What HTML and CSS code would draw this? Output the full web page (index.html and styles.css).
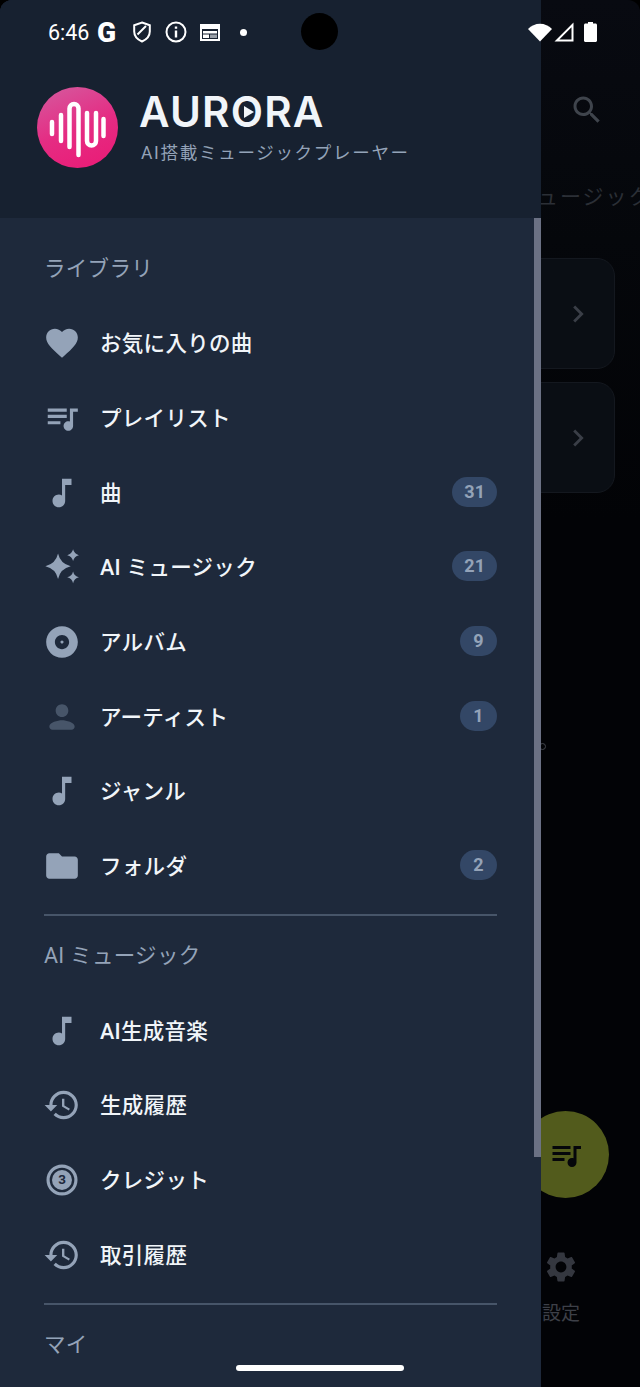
FILE: index.html
```html
<!DOCTYPE html>
<html lang="ja">
<head>
<meta charset="utf-8">
<title>Aurora</title>
<link rel="stylesheet" href="styles.css">
</head>
<body>
<div class="screen">
  <main class="app">
    <div class="app-top">
      <svg class="search" viewBox="0 0 24 24"><path d="M15.5 14h-.79l-.28-.27C15.41 12.59 16 11.11 16 9.5 16 5.91 13.09 3 9.5 3S3 5.91 3 9.5 5.91 16 9.5 16c1.61 0 3.09-.59 4.23-1.57l.27.28v.79l5 4.99L20.49 19l-4.99-5zm-6 0C7.01 14 5 11.99 5 9.5S7.01 5 9.5 5 14 7.01 14 9.5 11.99 14 9.5 14z"/></svg>
    </div>
    <p class="app-sub">ミュージック</p>
    <div class="cards">
      <div class="card"><svg class="chev" viewBox="0 0 24 24"><path d="M10 6L8.59 7.41 13.17 12l-4.58 4.59L10 18l6-6z"/></svg></div>
      <div class="card"><svg class="chev" viewBox="0 0 24 24"><path d="M10 6L8.59 7.41 13.17 12l-4.58 4.59L10 18l6-6z"/></svg></div>
    </div>
    <i class="ring"></i>
    <nav class="bottom-nav">
      <div class="nav-item">
        <svg class="gear" viewBox="0 0 24 24"><path d="M19.14 12.94c.04-.3.06-.61.06-.94 0-.32-.02-.64-.07-.94l2.03-1.58c.18-.14.23-.41.12-.61l-1.92-3.32c-.12-.22-.37-.29-.59-.22l-2.39.96c-.5-.38-1.03-.7-1.62-.94l-.36-2.54c-.04-.24-.24-.41-.48-.41h-3.84c-.24 0-.43.17-.47.41l-.36 2.54c-.59.24-1.13.57-1.62.94l-2.39-.96c-.22-.08-.47 0-.59.22L2.74 8.87c-.12.21-.08.47.12.61l2.03 1.58c-.05.3-.09.63-.09.94s.02.64.07.94l-2.03 1.58c-.18.14-.23.41-.12.61l1.92 3.32c.12.22.37.29.59.22l2.39-.96c.5.38 1.03.7 1.62.94l.36 2.54c.05.24.24.41.48.41h3.84c.24 0 .44-.17.47-.41l.36-2.54c.59-.24 1.13-.56 1.62-.94l2.39.96c.22.08.47 0 .59-.22l1.92-3.32c.12-.22.07-.47-.12-.61l-2.01-1.58zM12 15.6c-1.98 0-3.6-1.62-3.6-3.6s1.62-3.6 3.6-3.6 3.6 1.62 3.6 3.6-1.62 3.6-3.6 3.6z"/></svg>
        <span class="nav-label">設定</span>
      </div>
    </nav>
  </main>

  <div class="fab">
    <svg viewBox="0 0 24 24"><path d="M15 6H3v2h12V6zm0 4H3v2h12v-2zM3 16h8v-2H3v2zM17 6v8.18c-.31-.11-.65-.18-1-.18-1.66 0-3 1.34-3 3s1.34 3 3 3 3-1.34 3-3V8h3V6h-5z"/></svg>
  </div>

  <aside class="drawer">
    <header class="drawer-head">
      <svg class="logo" viewBox="0 0 81 81">
        <defs>
          <linearGradient id="lg" x1="0.2" y1="0" x2="0.6" y2="1">
            <stop offset="0" stop-color="#d6569c"/>
            <stop offset="0.55" stop-color="#e52c83"/>
            <stop offset="1" stop-color="#e91e78"/>
          </linearGradient>
        </defs>
        <circle cx="40.5" cy="40.5" r="40.5" fill="url(#lg)"/>
        <path class="logo-wave" d="M15 35v12M24 28v26M32.5 60V21.500a4.500 4.500 0 0 1 9 0V68M50 26v28a4.500 4.500 0 0 0 9 0V26M66.500 32v17"/>
      </svg>
      <div class="brand">
        <div class="wordmark">AUR<span class="wm-o">O<svg class="wm-play" viewBox="0 0 12 14"><path d="M1 1l10 6-10 6z"/></svg></span>RA</div>
        <div class="tagline">AI搭載ミュージックプレーヤー</div>
      </div>
    </header>

    <div class="drawer-body">
      <h2 class="section-label section-first">ライブラリ</h2>
      <ul class="menu">
        <li class="row"><svg class="ico" viewBox="0 0 24 24"><path d="M12 21.350l-1.450-1.320C5.400 15.360 2 12.280 2 8.500 2 5.420 4.420 3 7.500 3c1.740 0 3.410.81 4.500 2.090C13.090 3.810 14.760 3 16.500 3 19.580 3 22 5.420 22 8.500c0 3.780-3.400 6.860-8.550 11.540L12 21.350z"/></svg><span class="row-text">お気に入りの曲</span></li>
        <li class="row"><svg class="ico" viewBox="0 0 24 24"><path d="M15 6H3v2h12V6zm0 4H3v2h12v-2zM3 16h8v-2H3v2zM17 6v8.180c-.31-.11-.65-.18-1-.18-1.660 0-3 1.340-3 3s1.340 3 3 3 3-1.340 3-3V8h3V6h-5z"/></svg><span class="row-text">プレイリスト</span></li>
        <li class="row"><svg class="ico" viewBox="0 0 24 24"><path d="M12 3v10.550c-.59-.34-1.270-.55-2-.55-2.210 0-4 1.790-4 4s1.790 4 4 4 4-1.790 4-4V7h4V3h-6z"/></svg><span class="row-text">曲</span><span class="badge">31</span></li>
        <li class="row"><svg class="ico" viewBox="0 0 24 24"><path d="M9.500 3.500Q11 10 17.500 11.500 11 13 9.500 19.500 8 13 1.500 11.500 8 10 9.500 3.500zM19 .8Q19.700 3.800 22.700 4.500 19.700 5.200 19 8.200 18.300 5.200 15.300 4.500 18.300 3.800 19 .8zM19 14.800Q19.700 17.800 22.700 18.500 19.700 19.200 19 22.200 18.300 19.200 15.300 18.500 18.300 17.800 19 14.800z"/></svg><span class="row-text">AI ミュージック</span><span class="badge">21</span></li>
        <li class="row"><svg class="ico" viewBox="0 0 24 24"><path d="M12 2C6.480 2 2 6.480 2 12s4.480 10 10 10 10-4.480 10-10S17.520 2 12 2zm0 14.500c-2.490 0-4.500-2.010-4.500-4.500S9.510 7.500 12 7.500s4.500 2.010 4.500 4.500-2.010 4.500-4.500 4.500zm0-5.500c-.55 0-1 .45-1 1s.45 1 1 1 1-.45 1-1-.45-1-1-1z"/></svg><span class="row-text">アルバム</span><span class="badge">9</span></li>
        <li class="row"><svg class="ico ico-dim" viewBox="0 0 24 24"><path d="M12 12c2.210 0 4-1.790 4-4s-1.790-4-4-4-4 1.790-4 4 1.790 4 4 4zm0 2c-2.670 0-8 1.340-8 4c0 1.200.8 2 2 2h12c1.200 0 2-.8 2-2 0-2.660-5.330-4-8-4z"/></svg><span class="row-text">アーティスト</span><span class="badge">1</span></li>
        <li class="row"><svg class="ico" viewBox="0 0 24 24"><path d="M12 3v10.550c-.59-.34-1.270-.55-2-.55-2.210 0-4 1.790-4 4s1.790 4 4 4 4-1.790 4-4V7h4V3h-6z"/></svg><span class="row-text">ジャンル</span></li>
        <li class="row"><svg class="ico" viewBox="0 0 24 24"><path d="M10 4H4c-1.100 0-1.990.9-1.990 2L2 18c0 1.100.9 2 2 2h16c1.100 0 2-.9 2-2V8c0-1.100-.9-2-2-2h-8l-2-2z"/></svg><span class="row-text">フォルダ</span><span class="badge">2</span></li>
      </ul>
      <hr class="rule">
      <h2 class="section-label">AI ミュージック</h2>
      <ul class="menu">
        <li class="row"><svg class="ico" viewBox="0 0 24 24"><path d="M12 3v10.550c-.59-.34-1.270-.55-2-.55-2.210 0-4 1.790-4 4s1.790 4 4 4 4-1.790 4-4V7h4V3h-6z"/></svg><span class="row-text">AI生成音楽</span></li>
        <li class="row"><svg class="ico" viewBox="0 0 24 24"><path d="M13 3c-4.970 0-9 4.030-9 9H1l3.890 3.890.07.14L9 12H6c0-3.870 3.130-7 7-7s7 3.130 7 7-3.130 7-7 7c-1.930 0-3.680-.79-4.940-2.060l-1.420 1.420C8.270 19.990 10.510 21 13 21c4.970 0 9-4.030 9-9s-4.030-9-9-9zm-1 5v5l4.280 2.540.72-1.210-3.500-2.080V8H12z"/></svg><span class="row-text">生成履歴</span></li>
        <li class="row"><svg class="ico" viewBox="0 0 24 24"><circle class="cr-ring" cx="12" cy="12" r="8.800"/><circle class="cr-fill" cx="12" cy="12" r="6.300"/><text class="cr-num" x="12" y="14.300">3</text></svg><span class="row-text">クレジット</span></li>
        <li class="row"><svg class="ico" viewBox="0 0 24 24"><path d="M13 3c-4.970 0-9 4.030-9 9H1l3.890 3.890.07.14L9 12H6c0-3.870 3.130-7 7-7s7 3.130 7 7-3.130 7-7 7c-1.930 0-3.680-.79-4.940-2.060l-1.420 1.420C8.270 19.990 10.510 21 13 21c4.970 0 9-4.030 9-9s-4.030-9-9-9zm-1 5v5l4.280 2.540.72-1.210-3.500-2.080V8H12z"/></svg><span class="row-text">取引履歴</span></li>
      </ul>
      <hr class="rule">
      <h2 class="section-label">マイ</h2>
      <i class="scrollbar"></i>
    </div>
  </aside>

  <div class="statusbar">
    <span class="clock">6:46</span>
    <span class="g-mark">G</span>
    <svg class="st-shield" viewBox="0 0 20 22"><path class="st-line" d="M10 1.500l7.800 2.800v6.200c0 4.600-3.200 8-7.800 10-4.600-2-7.800-5.400-7.800-10V4.300z"/><path class="st-line" d="M5.500 13.500L14 5"/></svg>
    <svg class="st-info" viewBox="0 0 22 22"><circle class="st-line" cx="11" cy="11" r="9.500"/><path class="st-fill" d="M9.800 9.500h2.400v7H9.800zM9.800 5.500h2.400v2.300H9.800z"/></svg>
    <svg class="st-cal" viewBox="0 0 22 19"><path class="st-fill" d="M1 1h20v17H1zM3 6v10h16V6z"/><path class="st-fill" d="M4 8h14v2.500H4zM4 11.500h6v3.500H4z"/><path class="st-grey" d="M11 11.500h7v3.500h-7z"/></svg>
    <i class="st-dot"></i>
    <i class="camera"></i>
    <span class="st-right">
      <svg class="st-wifi" viewBox="0 0 24 18"><path class="st-fill" d="M12 18L0 5.500C3.200 2.200 7.400.2 12 .2s8.800 2 12 5.300z"/></svg>
      <svg class="st-signal" viewBox="0 0 20 20"><path class="st-fill" fill-rule="evenodd" d="M19.500.5V19.500H.5zM17.500 5.300L5.300 17.500H17.500z"/></svg>
      <svg class="st-batt" viewBox="0 0 13 20"><path class="st-fill" d="M4 0h5v1.500h2.500c.8 0 1.500.7 1.500 1.500v15.500c0 .8-.7 1.500-1.500 1.500h-10C.7 20 0 19.300 0 18.500V3c0-.8.7-1.500 1.500-1.500H4z"/></svg>
    </span>
  </div>

  <i class="home-bar"></i>
</div>
</body>
</html>
```
FILE: styles.css
```css
* { box-sizing: border-box; }
html, body { margin: 0; padding: 0; background: #000; }

.screen {
  position: relative;
  width: 640px;
  height: 1387px;
  overflow: hidden;
  background: #020306;
  border-radius: 12px 12px 0 0;
  font-family: Roboto, "Noto Sans CJK JP", sans-serif;
}

/* underlying page, dimmed by the drawer's scrim */
.app {
  display: flex;
  flex-direction: column;
  height: 100%;
  background: linear-gradient(#080a11 0, #05070b 240px, #020306 520px);
}
.app-top {
  display: flex;
  justify-content: flex-end;
  padding: 92px 35px 0 0;
}
.search { width: 36px; height: 36px; fill: #3f444c; }
.app-sub {
  margin: 54px 0 0;
  padding-left: 514px;
  white-space: nowrap;
  font-size: 21px;
  line-height: 30px;
  letter-spacing: 2px;
  color: #2b2f36;
}
.cards {
  display: flex;
  flex-direction: column;
  gap: 13px;
  margin: 46px 25px 0 400px;
}
.card {
  display: flex;
  align-items: center;
  justify-content: flex-end;
  height: 111px;
  padding-right: 19px;
  background: #0a0e14;
  border: 1px solid #14181f;
  border-radius: 18px;
}
.chev { width: 34px; height: 34px; fill: #3a3e47; }
.ring {
  display: block;
  width: 7px;
  height: 7px;
  margin: 250px 0 0 539px;
  border: 1px solid #44474e;
  border-radius: 50%;
}
.bottom-nav {
  display: flex;
  justify-content: flex-end;
  margin-top: auto;
  padding: 0 60px 60px 0;
}
.nav-item { display: flex; flex-direction: column; align-items: center; gap: 16px; }
.gear { width: 36px; height: 36px; fill: #34373f; }
.nav-label { font-size: 19px; line-height: 26px; color: #3d4048; }

.fab {
  position: absolute;
  left: 522px;
  top: 1111px;
  width: 87px;
  height: 87px;
  display: flex;
  align-items: center;
  justify-content: center;
  border-radius: 50%;
  background: #525b1c;
}
.fab svg { width: 36px; height: 36px; fill: #05060a; }

/* drawer */
.drawer {
  position: absolute;
  left: 0;
  top: 0;
  bottom: 0;
  width: 541px;
  display: flex;
  flex-direction: column;
  background: #1e293b;
}
.drawer-head {
  display: flex;
  align-items: flex-start;
  gap: 21px;
  height: 218px;
  padding: 87px 0 0 37px;
  background: #172130;
}
.logo { width: 81px; height: 81px; flex: none; }
.logo-wave { fill: none; stroke: #fff; stroke-width: 4.500; stroke-linecap: round; }
.brand { display: flex; flex-direction: column; }
.wordmark {
  font-family: Inter, Roboto, sans-serif;
  font-weight: 600;
  font-size: 42px;
  line-height: 46px;
  letter-spacing: 1.200px;
  margin-top: 2px;
  color: #f1f5f9;
}
.wm-o { position: relative; display: inline-block; }
.wm-play {
  position: absolute;
  left: 12px;
  top: 16px;
  width: 12px;
  height: 14px;
  fill: #f1f5f9;
}
.tagline {
  margin: 5px 0 0 2px;
  font-size: 17.500px;
  line-height: 26px;
  letter-spacing: 1.700px;
  color: #94a3b8;
}

.drawer-body { position: relative; flex: 1; padding: 0 44px; }
.section-label {
  margin: 28px 0 25px;
  font-size: 21.500px;
  font-weight: 400;
  line-height: 24px;
  letter-spacing: 0.300px;
  color: #94a3b8;
}
.section-first { margin: 39px 0 25px; }
.menu { list-style: none; margin: 0; padding: 0; }
.row {
  display: flex;
  align-items: center;
  height: 74.670px;
}
.ico { width: 38px; height: 38px; flex: none; margin: 0 19px 0 -1px; fill: #94a3b8; }
.ico-dim { fill: #475569; }
.row-text {
  padding-bottom: 3px;
  font-size: 21.500px;
  font-weight: 500;
  letter-spacing: 0.300px;
  color: #f1f5f9;
  white-space: nowrap;
}
.badge {
  margin: -2px 0 0 auto;
  min-width: 37px;
  height: 30px;
  padding: 0 12px;
  border-radius: 15px;
  background: #334766;
  color: #94a3b8;
  font-size: 18px;
  font-weight: 700;
  line-height: 30px;
  text-align: center;
}
.rule { margin: 11px 0 0; height: 2px; border: 0; background: #475569; }
.scrollbar {
  position: absolute;
  right: 0;
  top: 0;
  width: 7px;
  height: 939px;
  background: #6b7184;
}
.cr-ring { fill: none; stroke: #94a3b8; stroke-width: 2; }
.cr-fill { fill: #94a3b8; }
.cr-num {
  fill: #1e293b;
  font-family: Roboto, sans-serif;
  font-size: 8.500px;
  font-weight: 700;
  text-anchor: middle;
}

/* status bar */
.statusbar {
  position: absolute;
  left: 0;
  right: 0;
  top: 0;
  height: 64px;
  display: flex;
  align-items: center;
  padding-left: 48px;
  color: #fff;
}
.clock { font-size: 21.500px; width: 49px; }
.g-mark { font-size: 28px; font-weight: 900; width: 35px; }
.st-line { fill: none; stroke: #fff; stroke-width: 2; }
.st-fill { fill: #fff; }
.st-grey { fill: #9aa0a8; }
.st-shield { width: 20px; height: 22px; margin-right: 13px; }
.st-info { width: 22px; height: 22px; margin-right: 12px; }
.st-cal { width: 22px; height: 19px; }
.st-dot { width: 7px; height: 7px; margin-left: 19px; border-radius: 50%; background: #fff; }
.camera {
  position: absolute;
  left: 301px;
  top: 13px;
  width: 37px;
  height: 37px;
  border-radius: 50%;
  background: #000;
}
.st-right {
  position: absolute;
  left: 528px;
  top: 22px;
  display: flex;
  align-items: center;
}
.st-wifi { width: 24px; height: 19px; margin-right: 2px; }
.st-signal { width: 20px; height: 20px; margin-right: 10px; }
.st-batt { width: 13px; height: 20px; }

.home-bar {
  position: absolute;
  left: 236px;
  top: 1365px;
  width: 168px;
  height: 6px;
  border-radius: 3px;
  background: #fff;
}
```
